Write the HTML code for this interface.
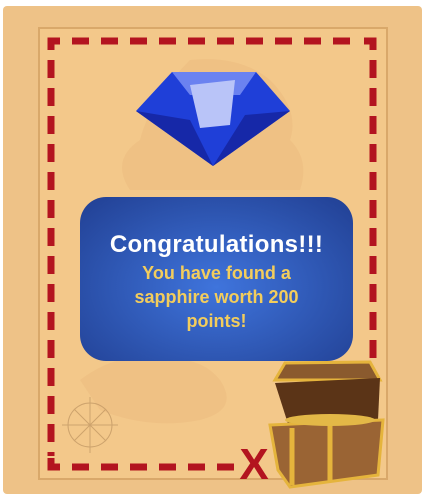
<!DOCTYPE html>
<html><head><style>
body{margin:0;width:426px;height:500px;background:#fff;overflow:hidden;position:relative;font-family:"Liberation Sans",sans-serif}
.p{position:absolute;left:3px;top:6px;width:419px;height:488px;background:#eec287;border-radius:4px}
.in{position:absolute;left:38px;top:27px;width:350px;height:453px;background:#f3c88a;border:2px solid #d9a86a;box-sizing:border-box}
.box{position:absolute;left:80px;top:197px;width:273px;height:164px;border-radius:26px;background:radial-gradient(ellipse at 50% 55%,#3f74dc,#2a4fa8 70%,#213f93);text-align:center;font-weight:bold}
.t{color:#fff;font-size:24px;margin-top:34px;letter-spacing:0.3px}
.y{color:#f3cd5c;font-size:18px;line-height:24px;margin-top:2px}
</style></head><body>
<div class="p"></div>
<div class="in"></div>
<svg width="426" height="500" style="position:absolute;left:0;top:0">
<g fill="#ebb97c" opacity=".45"><path d="M190 60 Q240 55 270 80 Q300 110 290 140 Q310 160 300 190 L130 190 Q110 160 140 140 Q150 100 190 60Z"/><path d="M80 380 Q120 350 160 360 Q200 355 220 380 Q240 410 200 420 Q150 430 100 410Z"/></g>
<g stroke="#b3141f" stroke-width="7" fill="none">
<path d="M51 50 V41 H60" /><path d="M373 50 V41 H364"/>
<path d="M72 41 H360" stroke-dasharray="17 12"/>
<path d="M51 60 V456" stroke-dasharray="18 10"/>
<path d="M373 60 V362" stroke-dasharray="18 10"/>
<path d="M51 458 V467 H60"/>
<path d="M72 467 H236" stroke-dasharray="17 12"/>
</g>
<text x="254" y="479" font-size="44" font-weight="bold" fill="#b3141f" text-anchor="middle" font-family="Liberation Sans">X</text>
<g>
<polygon points="136,111 172,72 256,72 290,111 213,166" fill="#1f3fd8"/>
<polygon points="172,72 256,72 240,95 190,95" fill="#6b82f0"/>
<polygon points="190,85 235,80 230,125 200,128" fill="#b9c4f8"/>
<polygon points="136,111 213,166 190,120" fill="#1628a8"/>
<polygon points="290,111 213,166 245,115" fill="#1628a8"/>
</g>
<g transform="translate(90,425)" stroke="#c49a66" fill="none" opacity=".8"><circle r="22"/><path d="M0-28 V28 M-28 0 H28 M-16-16 L16 16 M-16 16 L16-16"/></g>
<g>
<polygon points="275,380 285,363 370,362 380,380" fill="#8a5a2e" stroke="#e5b43c" stroke-width="3"/>
<polygon points="275,383 380,378 378,420 290,430" fill="#5b3417"/>
<polygon points="270,425 383,420 378,475 290,487 278,470" fill="#9a6434" stroke="#e5b43c" stroke-width="3"/>
<path d="M292 428 V485 M330 424 V482" stroke="#e5b43c" stroke-width="5"/>
<ellipse cx="330" cy="420" rx="45" ry="6" fill="#e3b847"/>
</g>
</svg>
<div class="box"><div class="t">Congratulations!!!</div><div class="y">You have found a<br>sapphire worth 200<br>points!</div></div>
</body></html>
